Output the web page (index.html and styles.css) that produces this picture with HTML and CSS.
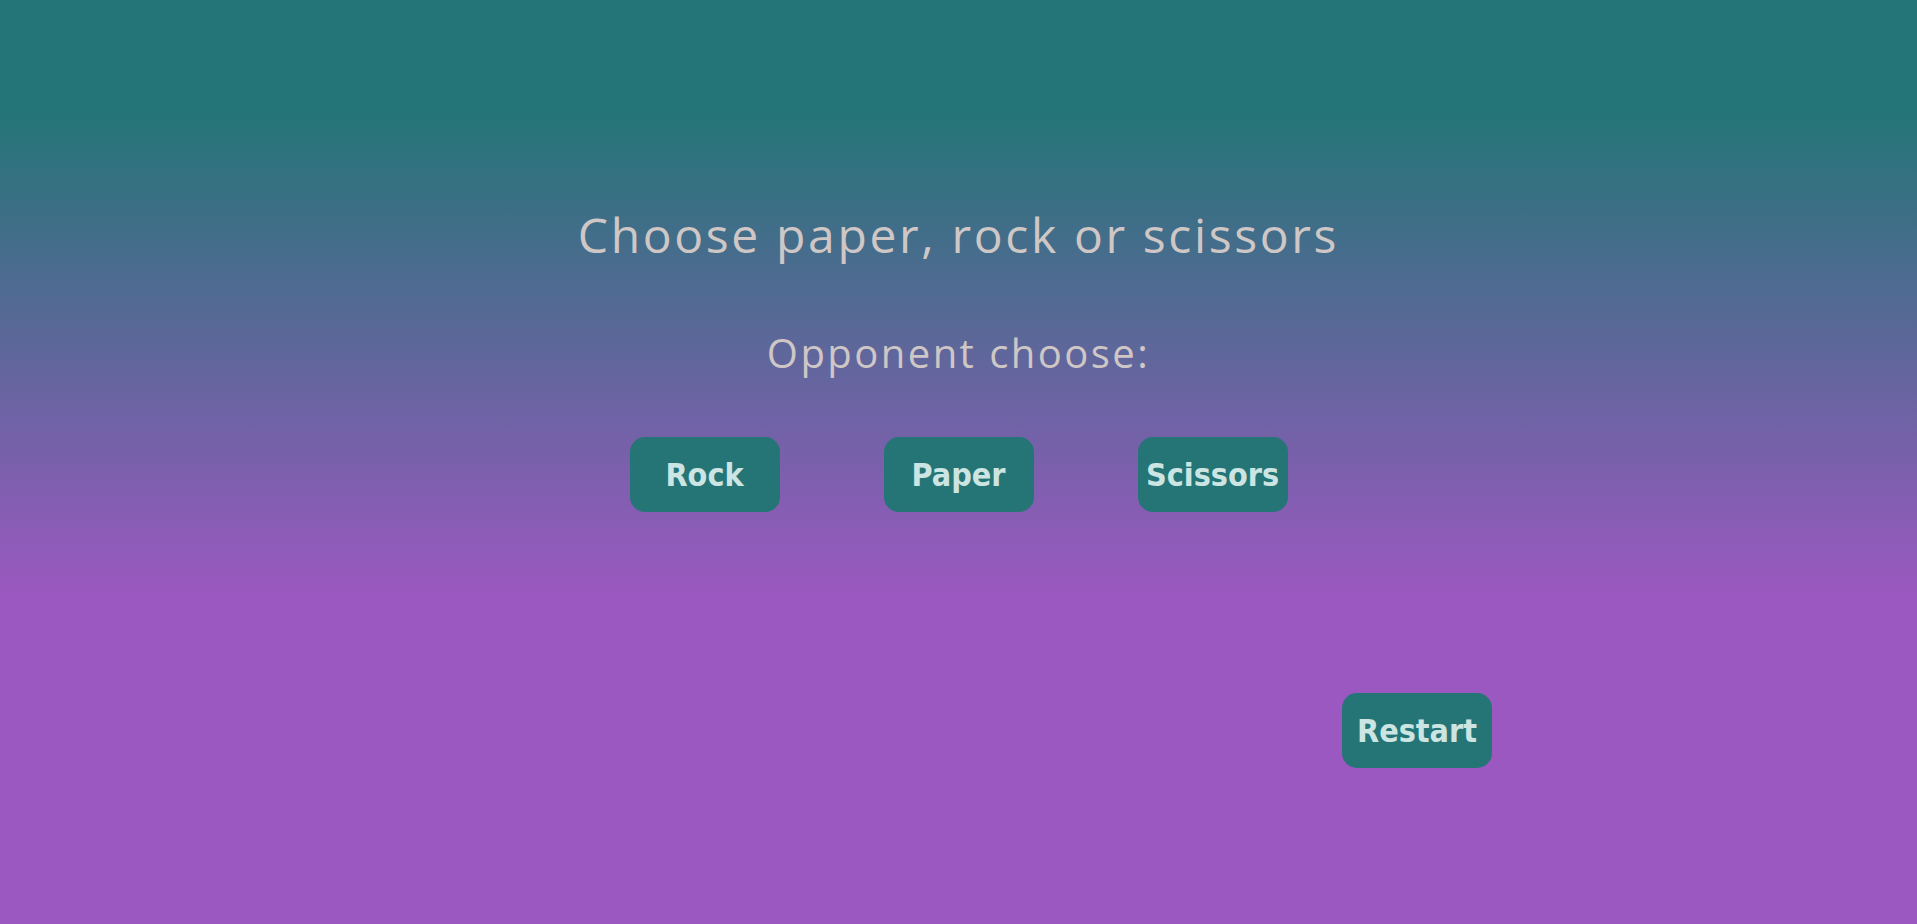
FILE: index.html
```html
<!DOCTYPE html>
<html lang="en">
<head>
<meta charset="utf-8">
<title>Rock Paper Scissors</title>
<link rel="stylesheet" href="styles.css">
</head>
<body>
<main class="game">
  <h1 class="title">Choose paper, rock or scissors</h1>
  <h2 class="opponent">Opponent choose:</h2>
  <div class="choices">
    <button class="btn">Rock</button>
    <button class="btn">Paper</button>
    <button class="btn">Scissors</button>
  </div>
  <div class="controls">
    <button class="btn btn-restart">Restart</button>
  </div>
</main>
</body>
</html>
```
FILE: styles.css
```css
html, body {
  margin: 0;
  padding: 0;
}
body {
  min-height: 100vh;
  background: linear-gradient(180deg, #247577 12.2%, #9b58c0 64.6%);
  font-family: "Open Sans", Lato, sans-serif;
}
.game {
  display: flex;
  flex-direction: column;
  align-items: center;
  padding-top: 205px;
}
.title {
  margin: 0;
  font-size: 48px;
  font-weight: 400;
  line-height: 60px;
  color: #cfc6c6;
  letter-spacing: 2.65px;
}
.opponent {
  margin: 63px 0 0;
  font-size: 40px;
  font-weight: 400;
  line-height: 50px;
  color: #cfc6c6;
  letter-spacing: 2.45px;
}
.choices {
  display: flex;
  gap: 104px;
  margin-top: 59px;
}
.btn {
  width: 150px;
  height: 75px;
  padding: 0;
  border: none;
  border-radius: 15px;
  background: #257577;
  color: #cde5e2;
  font-family: "DejaVu Sans Condensed", "DejaVu Sans", sans-serif;
  font-stretch: condensed;
  font-weight: bold;
  font-size: 32px;
  white-space: nowrap;
  overflow: visible;
}
.controls {
  display: flex;
  justify-content: center;
  margin-top: 181px;
}
.btn-restart {
  margin-left: 917px;
}
```
